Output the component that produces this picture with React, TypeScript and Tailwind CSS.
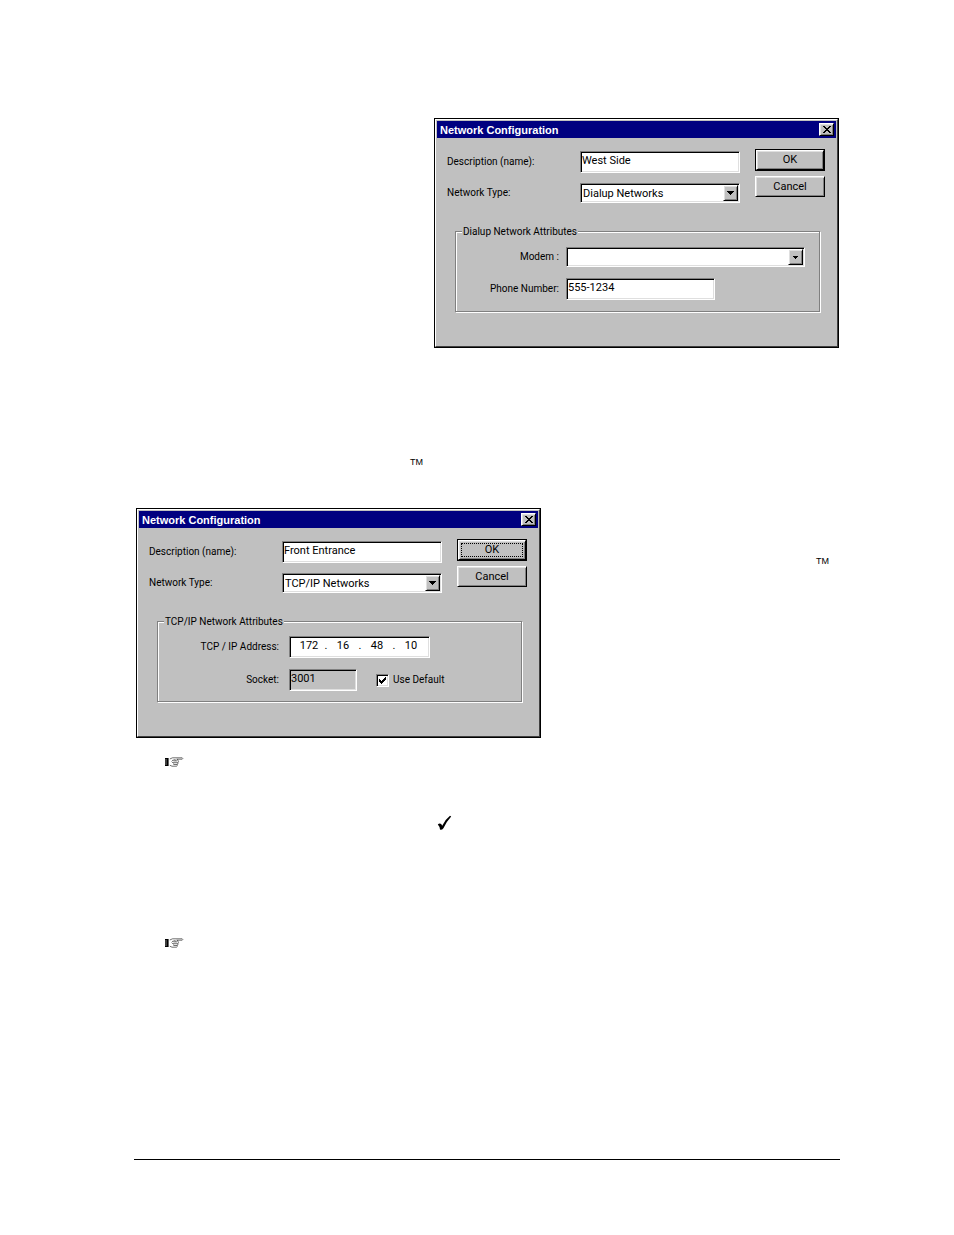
import type { ReactNode } from 'react'

const NETWORK_TYPES = ['Dialup Networks', 'TCP/IP Networks']

const SUNKEN =
  'border border-t-[#808080] border-l-[#808080] border-b-white border-r-white shadow-[inset_1px_1px_0_#000,inset_-1px_-1px_0_#dfdfdf]'
const RAISED =
  'bg-[#c0c0c0] border border-t-white border-l-white border-b-black border-r-black shadow-[inset_1px_1px_0_#dfdfdf,inset_-1px_-1px_0_#808080]'

interface FieldProps {
  id: string
  value: string
  className: string
  disabled?: boolean
}

function TextField({ id, value, className, disabled }: FieldProps) {
  return (
    <input
      id={id}
      type="text"
      defaultValue={value}
      disabled={disabled}
      className={`h-[22px] pl-px pb-[3px] text-black outline-none ${disabled ? 'bg-[#c0c0c0]' : 'bg-white'} ${SUNKEN} ${className}`}
    />
  )
}

interface ComboProps {
  id: string
  value: string
  options: string[]
  small?: boolean
}

function Combo({ id, value, options, small }: ComboProps) {
  return (
    <div className={`relative h-[20px] w-full bg-white ${SUNKEN}`}>
      <select id={id} defaultValue={value} className="block h-full w-full appearance-none bg-transparent pt-px pl-[2px] outline-none">
        {options.map((o) => (
          <option key={o} value={o}>{o}</option>
        ))}
      </select>
      <span className={`pointer-events-none absolute top-px right-px bottom-px flex w-[15px] items-center justify-center ${RAISED}`}>
        {small ? (
          <svg width="5" height="3" viewBox="0 0 5 3" shapeRendering="crispEdges"><path d="M0 0h5v1h-1v1h-1v1h-1v-1h-1v-1h-1z" /></svg>
        ) : (
          <svg width="7" height="4" viewBox="0 0 7 4" shapeRendering="crispEdges"><path d="M0 0h7v1h-1v1h-1v1h-1v1h-1v-1h-1v-1h-1v-1h-1z" /></svg>
        )}
      </span>
    </div>
  )
}

interface DialogProps {
  id: string
  description: string
  type: string
  legend: string
  focused?: boolean
  children: ReactNode
}

function NetworkDialog({ id, description, type, legend, focused, children }: DialogProps) {
  return (
    <section aria-labelledby={`${id}-title`} className="w-[405px] shrink-0 border border-black bg-[#c0c0c0]">
      <div className="border border-t-white border-l-white border-r-[#404040] border-b-[#404040] p-px">
        <header className="flex h-[17px] items-center justify-between bg-[#000080] pr-[2px] pl-[3px]">
          <h2 id={`${id}-title`} className="font-['Liberation_Sans',sans-serif] text-[11px] leading-[16px] font-bold text-white">Network Configuration</h2>
          <button type="button" aria-label="Close" className={`flex h-[13px] w-[15px] items-center justify-center ${RAISED}`}>
            <svg width="8" height="7" viewBox="0 0 8 7" shapeRendering="crispEdges">
              <path d="M0 0h2v1h1v1h2v-1h1v-1h2v1h-1v1h-1v1h-1v1h1v1h1v1h1v1h-2v-1h-1v-1h-2v1h-1v1h-2v-1h1v-1h1v-1h1v-1h-1v-1h-1v-1h-1z" />
            </svg>
          </button>
        </header>

        <form className="pb-[33px]" onSubmit={(e) => e.preventDefault()}>
          <div className="flex items-start justify-between pt-[11px] pr-[11px] pl-[10px]">
            <div className="mt-[2px] grid grid-cols-[133px_160px] items-center gap-y-[10px]">
              <label htmlFor={`${id}-desc`} className="text-[10px]">Description (name):</label>
              <TextField id={`${id}-desc`} value={description} className="w-full" />
              <label htmlFor={`${id}-type`} className="text-[10px]">Network Type:</label>
              <Combo id={`${id}-type`} value={type} options={NETWORK_TYPES} />
            </div>
            <div className="flex w-[70px] flex-col gap-[5px]">
              <button type="submit" className="h-[22px] border border-black">
                <span className={`flex h-full items-center justify-center p-[2px] ${RAISED}`}>
                  <span className={`flex h-full w-full items-center justify-center ${focused ? 'border border-dotted border-black' : ''}`}>OK</span>
                </span>
              </button>
              <button type="button" className={`h-[21px] ${RAISED}`}>Cancel</button>
            </div>
          </div>

          <fieldset className="mt-[22px] mr-[16px] ml-[18px] border border-[#808080] shadow-[1px_1px_0_#fff,inset_1px_1px_0_#fff]">
            <legend className="ml-[6px] bg-[#c0c0c0] px-px text-[10px] leading-[13px]">{legend}</legend>
            {children}
          </fieldset>
        </form>
      </div>
    </section>
  )
}

function IpField({ id, parts }: { id: string; parts: string[] }) {
  return (
    <div role="group" aria-label="TCP/IP Address" className={`flex h-[22px] w-[141px] items-center bg-white px-[6px] pb-[3px] ${SUNKEN}`}>
      {parts.map((part, i) => (
        <div key={i} className="flex items-center">
          {i > 0 && <span className="w-[8px] text-center">.</span>}
          <input
            id={i === 0 ? id : `${id}-${i}`}
            aria-label={i === 0 ? undefined : `Octet ${i + 1}`}
            type="text"
            defaultValue={part}
            className="h-[14px] w-[26px] bg-transparent text-center outline-none"
          />
        </div>
      ))}
    </div>
  )
}

function PointingHand() {
  return (
    <svg width="19" height="10" viewBox="0 0 19 10" fill="none" stroke="#333" strokeWidth="0.7" aria-hidden="true">
      <path d="M0 1h3.6v8h-3.6z" fill="#000" stroke="none" />
      <path d="M1 2v6" stroke="#ccc" strokeWidth="0.6" />
      <path d="M4.8 2L7.5 0.8H17.2Q18.4 1.4 17.2 2.2H11.5" />
      <path d="M4.8 8.2L7 9.2H11.5Q12.8 8.6 12 7.6Q13.6 6.8 12.8 5.8Q14.2 4.8 13 3.9Q13.6 2.8 12 2.3" />
      <path d="M7 3.6L10 2.6L11.6 3.9H8.5M8 5.7h4.8M8.4 7.5h3.6M6.6 4.5l2 2" />
    </svg>
  )
}

export default function App() {
  return (
    <main className="bg-white pr-[114px] pl-[134px] pt-[118px] pb-[75px] font-['Roboto','Liberation_Sans',sans-serif] text-[11px] leading-[14px] text-black">
      <div className="flex justify-end pr-px">
        <NetworkDialog id="dialup" description="West Side" type="Dialup Networks" legend="Dialup Network Attributes">
          <div className="grid grid-cols-[103px_1fr] items-center gap-x-[7px] gap-y-[11px] pt-[9px] pr-[14px] pb-[11px]">
            <label htmlFor="modem" className="text-right text-[10px]">Modem :</label>
            <Combo id="modem" value="" options={['']} small />
            <label htmlFor="phone" className="text-right text-[10px]">Phone Number:</label>
            <TextField id="phone" value="555-1234" className="w-[149px]" />
          </div>
        </NetworkDialog>
      </div>

      <p className="mt-[108px] pl-[276px] font-['Liberation_Sans',sans-serif] text-[9px] leading-[12px]">TM</p>

      <div className="mt-[40px] flex items-start justify-between pr-[11px] pl-[2px]">
        <NetworkDialog id="tcpip" description="Front Entrance" type="TCP/IP Networks" legend="TCP/IP Network Attributes" focused>
          <div className="grid grid-cols-[121px_1fr] items-center gap-x-[10px] gap-y-[11px] pt-[8px] pb-[10px]">
            <label htmlFor="address" className="text-right text-[10px]">TCP / IP Address:</label>
            <IpField id="address" parts={['172', '16', '48', '10']} />
            <label htmlFor="socket" className="text-right text-[10px]">Socket:</label>
            <div className="flex items-center">
              <TextField id="socket" value="3001" className="w-[68px]" disabled />
              <label className="ml-[19px] flex items-center gap-[4px] text-[10px]">
                <span className="relative h-[13px] w-[13px]">
                  <input type="checkbox" defaultChecked className={`block h-[13px] w-[13px] appearance-none bg-white ${SUNKEN}`} />
                  <svg className="pointer-events-none absolute top-[3px] left-[3px]" width="7" height="7" viewBox="0 0 7 7" shapeRendering="crispEdges">
                    <path d="M0 2h1v1h1v1h1v-1h1v-1h1v-1h1v-1h1v3h-1v1h-1v1h-1v1h-1v1h-1v-1h-1v-1h-1z" />
                  </svg>
                </span>
                Use Default
              </label>
            </div>
          </div>
        </NetworkDialog>
        <p className="mt-[47px] font-['Liberation_Sans',sans-serif] text-[9px] leading-[12px]">TM</p>
      </div>

      <div className="mt-[19px] flex pl-[31px]"><PointingHand /></div>

      <div className="mt-[48px] flex pl-[303px]">
        <svg width="16" height="16" viewBox="0 0 16 16" aria-hidden="true">
          <path d="M0.8 9.4Q2.6 7.6 4.2 9L5.2 10.8Q8.2 4.4 13 0.8L14.2 1.6Q9.6 6.6 6.4 13.2Q4.8 15.4 3 14.6Q2.6 11 0.8 9.4Z" />
        </svg>
      </div>

      <div className="mt-[107px] flex pl-[31px]"><PointingHand /></div>

      <hr className="mt-[211px] border-t border-black" />
    </main>
  )
}
